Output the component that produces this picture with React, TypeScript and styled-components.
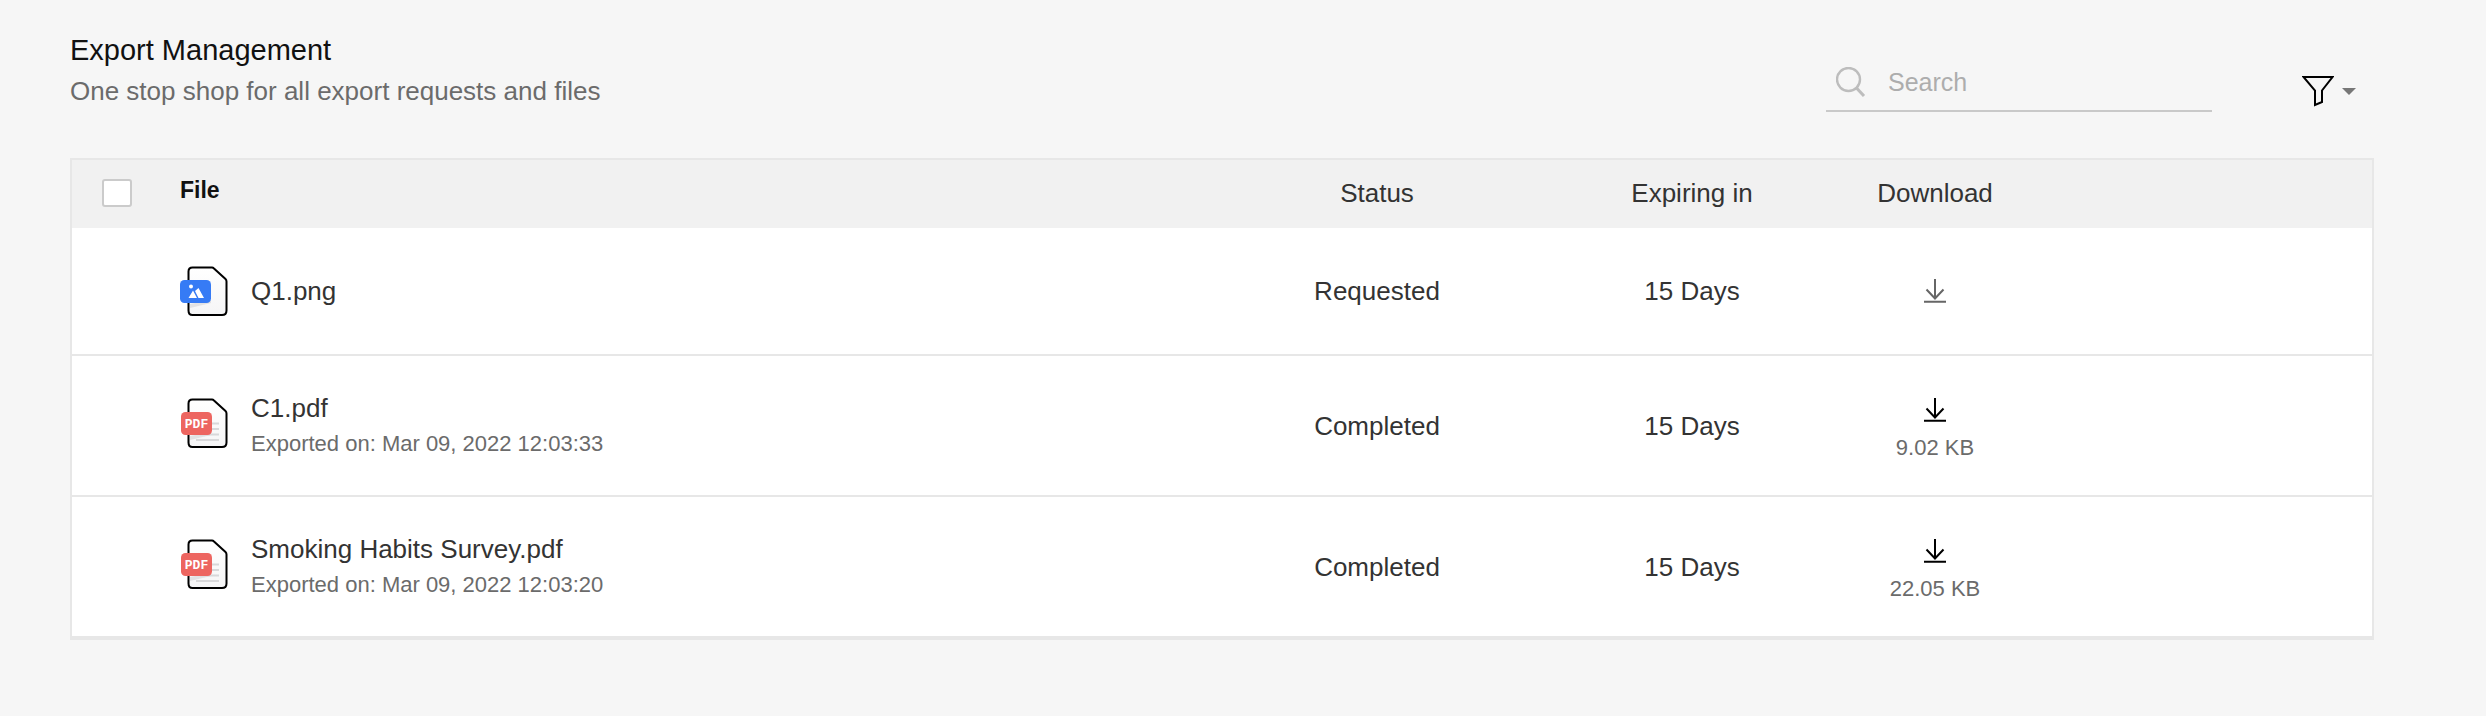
import React from "react";
import styled, { createGlobalStyle } from "styled-components";

const GlobalStyle = createGlobalStyle`
  * { box-sizing: border-box; }
  body {
    margin: 0;
    background: #f6f6f6;
    color: #333;
    font-family: "Liberation Sans", Arial, sans-serif;
    font-size: 26px;
    line-height: 32px;
  }
`;

const Page = styled.main`
  padding: 32px 112px 76px 70px;
`;

const Header = styled.header`
  display: flex;
  justify-content: space-between;
  align-items: flex-start;
  height: 126px;
`;

const Title = styled.h1`
  margin: 0;
  font-size: 29px;
  line-height: 36px;
  font-weight: 400;
  color: #111;
`;

const Subtitle = styled.p`
  margin: 7px 0 0;
  font-size: 26px;
  line-height: 32px;
  color: #6b6b6b;
`;

const Tools = styled.div`
  display: flex;
  align-items: center;
  gap: 90px;
  padding: 18px 18px 0 0;
`;

const SearchBox = styled.label`
  display: flex;
  align-items: center;
  gap: 22px;
  width: 386px;
  height: 62px;
  padding: 4px 0 0 10px;
  border-bottom: 2px solid #c9c9c9;
`;

const SearchInput = styled.input`
  flex: 1;
  min-width: 0;
  padding: 0;
  border: 0;
  outline: 0;
  background: transparent;
  font-family: inherit;
  font-size: 25px;
  color: #333;
  &::placeholder {
    color: #adadad;
    opacity: 1;
  }
`;

const FilterButton = styled.button`
  display: flex;
  align-items: center;
  gap: 8px;
  padding: 20px 0 0;
  border: 0;
  background: transparent;
  height: 62px;
`;

const FileTable = styled.table`
  width: 100%;
  table-layout: fixed;
  border: 2px solid #e7e7e7;
  border-collapse: separate;
  border-spacing: 0;
  background: #fff;
`;

const Col = styled.col<{ $width?: number }>`
  width: ${(p) => (p.$width ? `${p.$width}px` : "auto")};
`;

const HeadCell = styled.th<{ $file?: boolean }>`
  height: 68px;
  padding: ${(p) => (p.$file ? "0 0 8px" : "0 0 3px")};
  background: #f1f1f1;
  font-size: ${(p) => (p.$file ? "23px" : "26px")};
  font-weight: ${(p) => (p.$file ? 700 : 400)};
  color: ${(p) => (p.$file ? "#111" : "#333")};
  text-align: ${(p) => (p.$file ? "left" : "center")};
`;

const CheckBox = styled.input`
  appearance: none;
  display: block;
  width: 30px;
  height: 28px;
  margin: 0 0 0 30px;
  border: 2px solid #cbcbcb;
  border-radius: 3px;
  background: #fff;
`;

const Row = styled.tr<{ $tall?: boolean }>`
  height: ${(p) => (p.$tall ? 141 : 128)}px;
`;

const Cell = styled.td<{ $center?: boolean }>`
  padding: 0;
  border-bottom: 2px solid #e7e7e7;
  text-align: ${(p) => (p.$center ? "center" : "left")};
`;

const FileInfo = styled.div`
  display: flex;
  align-items: center;
  gap: 23px;
`;

const IconSlot = styled.div<{ $raised?: boolean }>`
  flex: none;
  padding-bottom: ${(p) => (p.$raised ? 6 : 0)}px;
`;

const FileText = styled.div`
  display: flex;
  flex-direction: column;
  gap: 4px;
`;

const Note = styled.span`
  font-size: 22px;
  color: #6b6b6b;
`;

const Download = styled.div<{ $sized?: boolean }>`
  display: flex;
  flex-direction: column;
  align-items: center;
  gap: 10px;
  padding-top: ${(p) => (p.$sized ? 10 : 0)}px;
`;

const DownloadButton = styled.button`
  display: block;
  padding: 0;
  border: 0;
  background: transparent;
  color: #000;
  &:disabled {
    color: #666;
  }
`;

const Svg = styled.svg`
  display: block;
  flex: none;
`;

const SearchIcon = () => (
  <Svg width="30" height="30" viewBox="0 0 30 30" fill="none" stroke="#bdbdbd" strokeWidth="2.4">
    <circle cx="12.5" cy="12.5" r="11.5" />
    <path d="M20.5 21 L28 29" strokeWidth="3" />
  </Svg>
);

const FilterIcon = () => (
  <Svg width="32" height="32" viewBox="0 0 32 32" fill="none" stroke="#000" strokeWidth="2">
    <path d="M1.5 2 H30.5 L20 15.5 V27 L13 30 V15.5 Z" />
  </Svg>
);

const Caret = () => (
  <Svg width="14" height="7" viewBox="0 0 14 7">
    <path d="M0 0 H14 L7 7 Z" fill="#777" />
  </Svg>
);

const DownloadIcon = () => (
  <Svg width="24" height="24" viewBox="0 0 24 24" fill="none" stroke="currentColor" strokeWidth="2">
    <path d="M12 0 V19 M3.5 10.5 L12 19.5 L20.5 10.5 M1 22.7 H23" />
  </Svg>
);

const FileIcon = ({ kind }: { kind: "png" | "pdf" }) => (
  <Svg width="48" height="50" viewBox="0 0 48 50">
    <defs>
      <linearGradient id="paper" x1="0" y1="0" x2="0" y2="1">
        <stop offset="0" stopColor="#fff" />
        <stop offset="1" stopColor="#f5f5f6" />
      </linearGradient>
    </defs>
    <path
      d="M12.5 1.5 H32 Q33 1.5 34 2.5 L45.5 13 Q46.5 14 46.5 15.5 V44.5 Q46.5 49 42 49 H12.5 Q8.5 49 8.5 44.5 V5.5 Q8.5 1.5 12.5 1.5 Z"
      fill="url(#paper)"
      stroke="#000"
      strokeWidth="2"
    />
    <path d="M10 38 L31 34 V37 L10 42 Z" fill="#dcdcde" opacity="0.8" />
    {kind === "pdf" ? (
      <>
        <path d="M30 25.5 H39 M30 31 H39 M20 36.5 H39 M16 42 H39" stroke="#d8d8da" strokeWidth="2" />
        <rect x="1" y="14" width="31" height="23" rx="4.5" fill="#ed6560" />
        <text
          x="16.5"
          y="30"
          textAnchor="middle"
          fill="#fff"
          fontFamily="'Liberation Mono', monospace"
          fontSize="13"
          fontWeight="700"
        >
          PDF
        </text>
      </>
    ) : (
      <>
        <rect x="0" y="14" width="31" height="23" rx="4.5" fill="#367bf5" />
        <circle cx="11" cy="20.5" r="2" fill="#fff" />
        <path d="M8.5 32 L13 24.5 L17 32 Z M15 25 L18.5 22 L24 32 H18.5 Z" fill="#fff" />
      </>
    )}
  </Svg>
);

type Item = {
  name: string;
  kind: "png" | "pdf";
  exported?: string;
  status: string;
  expires: string;
  size?: string;
};

const items: Item[] = [
  { name: "Q1.png", kind: "png", status: "Requested", expires: "15 Days" },
  {
    name: "C1.pdf",
    kind: "pdf",
    exported: "Mar 09, 2022 12:03:33",
    status: "Completed",
    expires: "15 Days",
    size: "9.02 KB",
  },
  {
    name: "Smoking Habits Survey.pdf",
    kind: "pdf",
    exported: "Mar 09, 2022 12:03:20",
    status: "Completed",
    expires: "15 Days",
    size: "22.05 KB",
  },
];

export default function App() {
  return (
    <>
      <GlobalStyle />
      <Page>
        <Header>
          <div>
            <Title>Export Management</Title>
            <Subtitle>One stop shop for all export requests and files</Subtitle>
          </div>
          <Tools>
            <SearchBox>
              <SearchIcon />
              <SearchInput type="search" placeholder="Search" aria-label="Search" />
            </SearchBox>
            <FilterButton type="button" aria-label="Filter">
              <FilterIcon />
              <Caret />
            </FilterButton>
          </Tools>
        </Header>
        <FileTable>
          <colgroup>
            <Col $width={108} />
            <Col />
            <Col $width={314} />
            <Col $width={316} />
            <Col $width={170} />
            <Col $width={352} />
          </colgroup>
          <thead>
            <tr>
              <HeadCell>
                <CheckBox type="checkbox" aria-label="Select all files" />
              </HeadCell>
              <HeadCell $file>File</HeadCell>
              <HeadCell>Status</HeadCell>
              <HeadCell>Expiring in</HeadCell>
              <HeadCell>Download</HeadCell>
              <HeadCell />
            </tr>
          </thead>
          <tbody>
            {items.map((item) => (
              <Row key={item.name} $tall={Boolean(item.exported)}>
                <Cell />
                <Cell>
                  <FileInfo>
                    <IconSlot $raised={Boolean(item.exported)}>
                      <FileIcon kind={item.kind} />
                    </IconSlot>
                    <FileText>
                      <span>{item.name}</span>
                      {item.exported && <Note>Exported on: {item.exported}</Note>}
                    </FileText>
                  </FileInfo>
                </Cell>
                <Cell $center>{item.status}</Cell>
                <Cell $center>{item.expires}</Cell>
                <Cell $center>
                  <Download $sized={Boolean(item.size)}>
                    <DownloadButton type="button" disabled={!item.size} aria-label={`Download ${item.name}`}>
                      <DownloadIcon />
                    </DownloadButton>
                    {item.size && <Note>{item.size}</Note>}
                  </Download>
                </Cell>
                <Cell />
              </Row>
            ))}
          </tbody>
        </FileTable>
      </Page>
    </>
  );
}
